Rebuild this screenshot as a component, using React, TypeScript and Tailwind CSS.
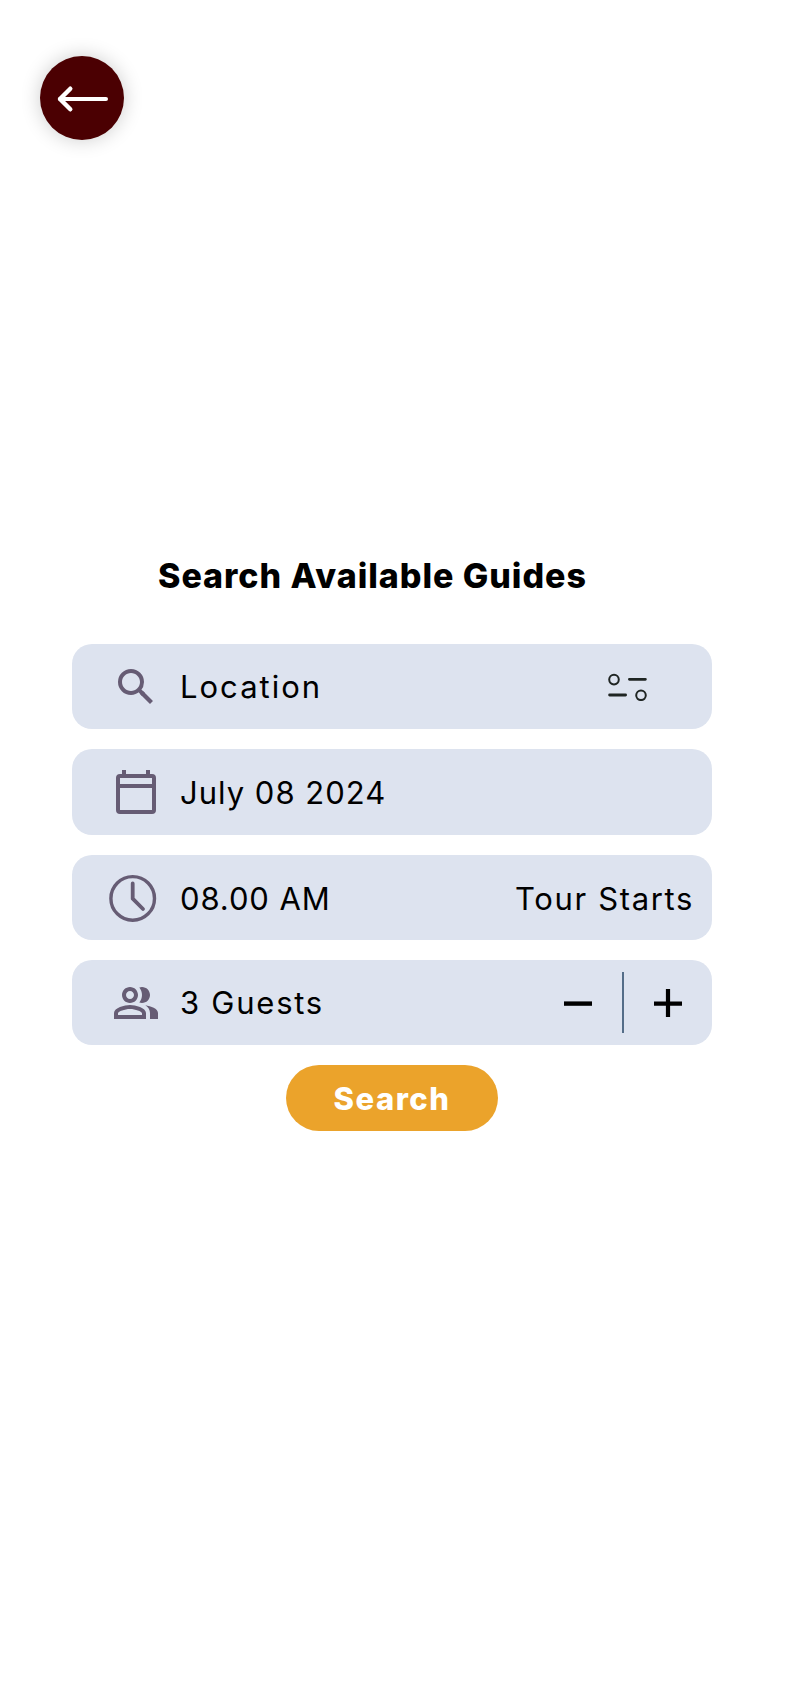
import React from "react";

interface FieldProps {
  icon: React.ReactNode;
  label: string;
  labelClass: string;
  children?: React.ReactNode;
}

function Field({ icon, label, labelClass, children }: FieldProps) {
  return (
    <div className="flex h-[85.3px] w-full items-center rounded-[20px] bg-[#dde3ef] pl-10">
      <div className="h-12 w-12 shrink-0 text-[#665c74]">{icon}</div>
      <span className={`ml-5 whitespace-nowrap text-[31px] leading-[48px] ${labelClass}`}>
        {label}
      </span>
      {children}
    </div>
  );
}

function BackArrow() {
  return (
    <svg width="84" height="84" viewBox="0 0 84 84" fill="none" stroke="white" strokeWidth="4" strokeLinecap="round" strokeLinejoin="round">
      <path d="M66 43H20" />
      <path d="M30.3 32.7L20 43l10.3 10.3" strokeWidth="4.4" />
    </svg>
  );
}

function SearchIcon() {
  return (
    <svg width="48" height="48" viewBox="0 0 24 24" fill="currentColor">
      <path d="M15.5 14h-.79l-.28-.27A6.471 6.471 0 0 0 16 9.5 6.5 6.5 0 1 0 9.5 16c1.61 0 3.09-.59 4.23-1.57l.27.28v.79l5 4.99L20.49 19l-4.99-5zm-6 0C7.01 14 5 11.99 5 9.5S7.01 5 9.5 5 14 7.01 14 9.5 11.99 14 9.5 14z" />
      <path d="M13.3 14.6l1.4-1.4 1.8 1.8-1.5 1.5z" />
    </svg>
  );
}

function CalendarIcon() {
  return (
    <svg width="48" height="48" viewBox="0 0 48 48" fill="none" stroke="currentColor" strokeWidth="4">
      <rect x="6" y="8" width="36" height="36" rx="2" />
      <path d="M6 18h36M12 2v6M36 2v6" />
    </svg>
  );
}

function ClockIcon() {
  return (
    <svg className="overflow-visible" width="48" height="48" viewBox="0 0 48 48" fill="none" stroke="currentColor" strokeWidth="3.4">
      <circle cx="20.7" cy="25.4" r="21.8" />
      <path d="M20.7 10.5v15.2L31 36" strokeWidth="3.8" strokeLinecap="round" strokeLinejoin="round" />
    </svg>
  );
}

function GuestsIcon() {
  return (
    <svg width="48" height="48" viewBox="0 0 24 24" fill="currentColor">
      <path d="M16.67 13.13C18.04 14.06 19 15.32 19 17v3h4v-3c0-2.18-3.57-3.47-6.33-3.87z" />
      <path d="M15 12c2.21 0 4-1.79 4-4s-1.79-4-4-4c-.47 0-.91.1-1.33.24C14.5 5.27 15 6.58 15 8s-.5 2.73-1.33 3.76c.42.14.86.24 1.33.24z" />
      <path d="M9 12c2.21 0 4-1.79 4-4s-1.79-4-4-4-4 1.79-4 4 1.79 4 4 4zm0-6c1.1 0 2 .9 2 2s-.9 2-2 2-2-.9-2-2 .9-2 2-2z" />
      <path d="M9 13c-2.67 0-8 1.34-8 4v3h16v-3c0-2.66-5.33-4-8-4zm6 5H3v-.99C3.2 16.29 6.3 15 9 15s5.8 1.29 6 2v1z" />
    </svg>
  );
}

function FilterIcon() {
  return (
    <svg width="40" height="28" viewBox="0 0 40 28" fill="none" stroke="#1f2523">
      <circle cx="6" cy="6.6" r="4.8" strokeWidth="2" />
      <circle cx="33" cy="22.3" r="4.8" strokeWidth="2" />
      <path d="M21.4 6.3h16M1.6 22h16" strokeWidth="2.8" strokeLinecap="round" />
    </svg>
  );
}

export default function App() {
  return (
    <main className="flex h-[1704px] w-[786px] flex-col overflow-hidden bg-white font-['Inter',sans-serif] text-black">
      <header className="px-10 pt-14">
        <button className="block h-21 w-21 rounded-full bg-[#4b0002] shadow-[0_0_20px_rgba(0,0,0,0.2)]" aria-label="Back">
          <BackArrow />
        </button>
      </header>

      <h1 className="mt-[412px] ml-[158px] whitespace-nowrap text-[34px] leading-[48px] font-extrabold tracking-[0.95px]">
        Search Available Guides
      </h1>

      <section className="mt-11 ml-[72px] flex w-[640px] flex-col gap-[20.1px]">
        <Field icon={<SearchIcon />} label="Location" labelClass="pt-px tracking-[2px]">
          <div className="mr-[64px] ml-auto">
            <FilterIcon />
          </div>
        </Field>
        <Field icon={<CalendarIcon />} label="July 08 2024" labelClass="pt-px tracking-[1px]" />
        <Field icon={<ClockIcon />} label="08.00 AM" labelClass="pt-[3px] tracking-[0.9px]">
          <span className="mr-[18px] ml-auto whitespace-nowrap pt-[3px] text-[31px] leading-[48px] tracking-[1.65px]">
            Tour Starts
          </span>
        </Field>
        <Field icon={<GuestsIcon />} label="3 Guests" labelClass="pt-px tracking-[1.75px]">
          <div className="mr-[30px] ml-auto flex items-center gap-[30px]">
            <svg width="28" height="28" viewBox="0 0 28 28" stroke="black" strokeWidth="4.4">
              <path d="M0 14.6h28" />
            </svg>
            <div className="h-[61px] w-0.5 bg-[#546d88]" />
            <svg width="28" height="28" viewBox="0 0 28 28" stroke="black" strokeWidth="4.2">
              <path d="M0 14.6h28M14 0v28" />
            </svg>
          </div>
        </Field>
      </section>

      <button className="mt-5 ml-[286px] h-[66px] w-[212px] rounded-full bg-[#eba32b] pt-px text-[31px] leading-[65px] font-extrabold tracking-[1.5px] text-white">
        Search
      </button>
    </main>
  );
}
